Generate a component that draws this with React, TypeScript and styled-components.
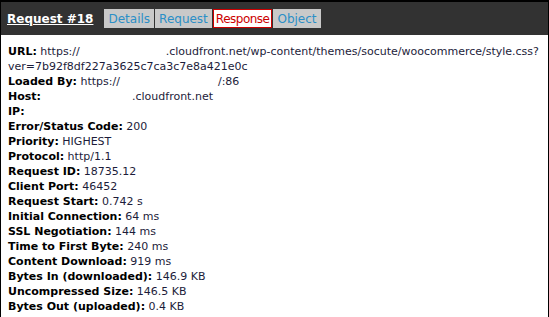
import React from "react";
import styled, { createGlobalStyle } from "styled-components";

const Global = createGlobalStyle`
  html, body { margin: 0; padding: 0; background: #fff; }
  body { font-family: "DejaVu Sans", Verdana, sans-serif; }
`;

const Panel = styled.div`
  width: 549px;
  box-sizing: border-box;
  border-left: 1px solid #000;
  border-right: 1px solid #000;
  border-top: 2px solid #000;
  min-height: 317px;
`;

const Header = styled.div`
  height: 33px;
  background: #323232;
  display: flex;
  align-items: center;
  padding-left: 6px;
`;

const Title = styled.a`
  color: #fff;
  font-weight: bold;
  font-size: 12px;
  text-decoration: underline;
  margin-right: 11px;
`;

const Tabs = styled.div`
  display: flex;
  align-items: stretch;
  height: 19px;
  gap: 1px;
  background: #323232;
`;

const Tab = styled.span<{ $active?: boolean }>`
  display: flex;
  align-items: center;
  padding: 0 ${(p) => (p.$active ? "2px" : "4px")};
  font-size: 12px;
  letter-spacing: ${(p) => (p.$active ? "-0.5px" : "0")};
  background: ${(p) => (p.$active ? "#fff" : "#c9c9c9")};
  color: ${(p) => (p.$active ? "#cc0000" : "#2b8fc7")};
  border: ${(p) => (p.$active ? "1px solid #cc0000" : "none")};
  box-sizing: border-box;
`;

const Body = styled.div`
  padding: 9px 0 0 7px;
  font-size: 11px;
  line-height: 15px;
  color: #1c1c3a;
`;

const Row = styled.div``;

const Label = styled.b`
  color: #000;
`;

const Blank = styled.span<{ $w: number }>`
  display: inline-block;
  width: ${(p) => p.$w}px;
`;

const rows: [string, string][] = [
  ["IP:", ""],
  ["Error/Status Code:", "200"],
  ["Priority:", "HIGHEST"],
  ["Protocol:", "http/1.1"],
  ["Request ID:", "18735.12"],
  ["Client Port:", "46452"],
  ["Request Start:", "0.742 s"],
  ["Initial Connection:", "64 ms"],
  ["SSL Negotiation:", "144 ms"],
  ["Time to First Byte:", "240 ms"],
  ["Content Download:", "919 ms"],
  ["Bytes In (downloaded):", "146.9 KB"],
  ["Uncompressed Size:", "146.5 KB"],
  ["Bytes Out (uploaded):", "0.4 KB"],
];

export default function App() {
  return (
    <>
      <Global />
      <Panel>
        <Header>
          <Title>Request #18</Title>
          <Tabs>
            <Tab>Details</Tab>
            <Tab>Request</Tab>
            <Tab $active>Response</Tab>
            <Tab>Object</Tab>
          </Tabs>
        </Header>
        <Body>
          <Row>
            <Label>URL:</Label> https://<Blank $w={86} />.cloudfront.net/wp-content/themes/socute/woocommerce/style.css?
            ver=7b92f8df227a3625c7ca3c7e8a421e0c
          </Row>
          <Row>
            <Label>Loaded By:</Label> https://<Blank $w={98} />/:86
          </Row>
          <Row>
            <Label>Host:</Label>
            <Blank $w={91} />.cloudfront.net
          </Row>
          {rows.map(([l, v]) => (
            <Row key={l}>
              <Label>{l}</Label> {v}
            </Row>
          ))}
        </Body>
      </Panel>
    </>
  );
}
